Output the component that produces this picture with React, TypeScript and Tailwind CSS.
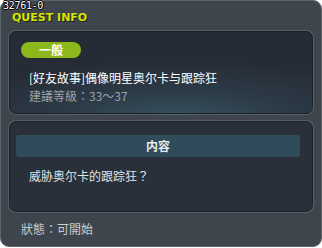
export default function App() {
  return (
    <div className="w-[322px] h-[248px] bg-white">
      <div className="relative w-[322px] h-[247px] rounded-[9px] border border-[#5b636b] bg-[#3e454c] flex flex-col px-[8px] font-['Noto_Sans_CJK_TC','Noto_Sans_CJK_SC',sans-serif]">
        {/* id label */}
        <div className="absolute left-[2px] top-0 text-[10px] leading-[10px] text-white font-['DejaVu_Sans_Mono',monospace] tracking-[-0.3px] [text-shadow:1px_0_#000,-1px_0_#000,0_1px_#000,0_-1px_#000]">
          32761-0
        </div>

        {/* title */}
        <div className="h-[30px] pt-[11px] pl-[3px] flex items-start">
          <span className="text-[11px] leading-[11px] font-bold text-[#d6e400] font-['DejaVu_Sans',sans-serif] [text-shadow:1px_1px_#1d2125]">
            QUEST INFO
          </span>
        </div>

        {/* quest card */}
        <div className="h-[83px] w-[304px] rounded-[7px] border border-[#1c2127] shadow-[0_0_0_1px_#56606a] bg-[radial-gradient(ellipse_80%_70%_at_55%_105%,#36525f_0%,#2c3b47_45%,#262c36_100%)] pl-[11px] pt-[10px] flex flex-col">
          <div className="w-[60px] h-[16px] rounded-full bg-[#8db81c] flex items-center justify-center text-[12px] font-bold text-white leading-none">
            一般
          </div>
          <div className="mt-[11px] pl-[8px] text-[12px] leading-[18px] text-white">
            [好友故事]偶像明星奥尔卡与跟踪狂
          </div>
          <div className="pl-[8px] text-[12px] leading-[18px] text-[#9aa3ab]">
            建議等級：33～37
          </div>
        </div>

        {/* content card */}
        <div className="mt-[7px] h-[91px] w-[304px] rounded-[7px] border border-[#1c2127] shadow-[0_0_0_1px_#56606a] bg-[#2a3039] pt-[13px] pl-[6px] pr-[12px] flex flex-col">
          <div className="h-[22px] rounded-[3px] bg-[#304b59] flex items-center justify-center text-[12px] font-bold text-[#e6ecef]">
            内容
          </div>
          <div className="mt-[10px] pl-[13px] text-[12px] leading-[18px] text-[#dfe3e6]">
            威胁奥尔卡的跟踪狂？
          </div>
        </div>

        {/* status */}
        <div className="mt-[8px] pl-[12px] text-[12px] leading-[18px] text-[#c9cfd4]">
          狀態：可開始
        </div>
      </div>
    </div>
  );
}
